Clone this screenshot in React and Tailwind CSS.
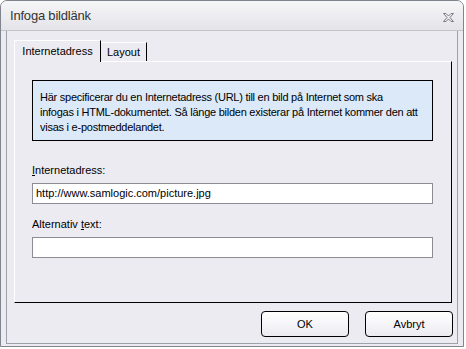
export default function App() {
    return (
        <div className="w-[466px] h-[349px] bg-white font-['Liberation_Sans',Arial,sans-serif] text-[11px] text-black">
            <div className="w-[464px] h-[347px] border border-[#7f848d] rounded-t-[7px] flex flex-col overflow-hidden bg-[#ecebf1]">
                {/* title bar */}
                <div className="h-[30px] shrink-0 flex items-center justify-between pl-[9px] pr-[9px] bg-gradient-to-b from-[#f6f6f8] to-[#e4e4e9] border-b border-[#c3c3ca]">
                    <span className="text-[13px] text-[#333] tracking-[-0.2px]">Infoga bildlänk</span>
                    <svg width="11" height="9" viewBox="0 0 11 9" className="mt-[4px]">
                        <path
                            d="M0.5 0.5 H3 L5.5 3 L8 0.5 H10.5 L7 4.5 L10.5 8.5 H8 L5.5 6 L3 8.5 H0.5 L4 4.5 Z"
                            fill="none"
                            stroke="#7a7a80"
                            strokeWidth="1"
                        />
                    </svg>
                </div>

                {/* body with inner frame */}
                <div className="flex-1 px-[5px] pb-[2px] flex">
                    <div className="flex-1 min-w-0 border-l border-r border-b border-[#9da1a9] flex flex-col">
                        <div className="pl-[7px] pt-[8px]">
                            {/* tabs */}
                            <div className="flex items-end h-[22px]">
                                <div className="h-[22px] w-[87px] border-l border-t border-white border-r border-r-black flex items-center justify-center relative -mb-px bg-[#ecebf1] z-10">
                                    Internetadress
                                </div>
                                <div className="h-[19px] w-[46px] border-t border-white border-r border-r-black flex items-center justify-center">
                                    Layout
                                </div>
                            </div>
                            {/* panel */}
                            <div className="w-[438px] h-[242px] border-l border-t border-white border-r border-b border-r-black border-b-black pt-[18px] pl-[17px] pr-[18px]">
                                <div className="h-[61px] border border-black bg-[#dce9f9] px-[7px] pt-[9px] leading-[15px] tracking-[-0.25px] whitespace-nowrap overflow-hidden">
                                    Här specificerar du en Internetadress (URL) till en bild på Internet som ska
                                    <br />
                                    infogas i HTML-dokumentet. Så länge bilden existerar på Internet kommer den att
                                    <br />
                                    visas i e-postmeddelandet.
                                </div>
                                <div className="mt-[23px] leading-[13px]">
                                    <span className="underline">I</span>nternetadress:
                                </div>
                                <div className="mt-[6px] h-[21px] border border-[#8a8d94] bg-white flex items-center px-[3px]">
                                    http://www.samlogic.com/picture.jpg
                                </div>
                                <div className="mt-[14px] leading-[13px]">
                                    Alternativ <span className="underline">t</span>ext:
                                </div>
                                <div className="mt-[6px] h-[21px] border border-[#8a8d94] bg-white"></div>
                            </div>
                        </div>
                        {/* buttons */}
                        <div className="flex justify-end gap-[16px] pr-[4px] pt-[8px]">
                            <button className="w-[88px] h-[26px] rounded-[4px] border border-black bg-gradient-to-b from-white to-[#ecebf1]">
                                OK
                            </button>
                            <button className="w-[88px] h-[26px] rounded-[4px] border border-black bg-gradient-to-b from-white to-[#ecebf1]">
                                Avbryt
                            </button>
                        </div>
                    </div>
                </div>
            </div>
        </div>
    );
}
